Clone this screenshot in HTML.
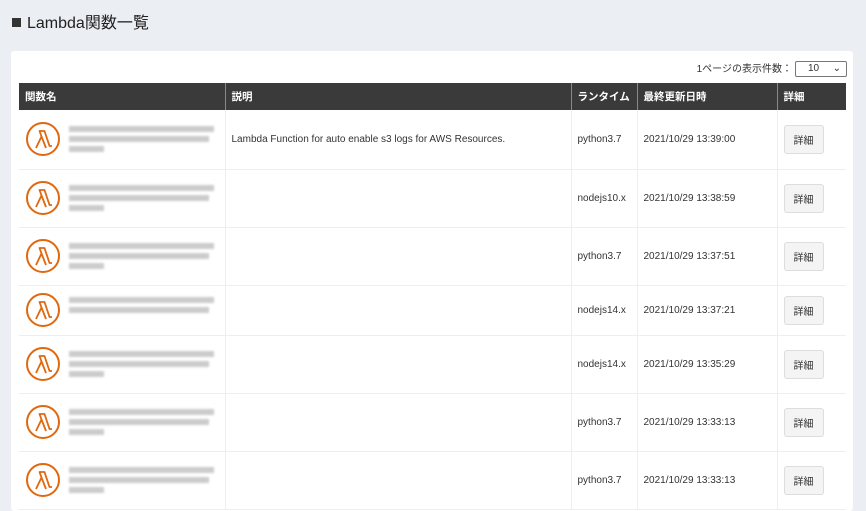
<!DOCTYPE html><html><head><meta charset="utf-8"><style>
body{margin:0;background:#ebeef2;font-family:"Liberation Sans","Noto Sans CJK JP",sans-serif;width:866px;height:487px;overflow:hidden;position:relative}
h1{position:absolute;left:12px;top:9px;margin:0;font-size:16px;font-weight:normal;color:#222}
h1:before{content:"";display:inline-block;width:9px;height:9px;background:#333;margin-right:6px;vertical-align:1px}
.card{position:absolute;left:11px;top:51px;width:842px;height:460px;background:#fff;border-radius:3px}
.pp{position:absolute;right:6px;top:9px;font-size:10px;color:#333}
.pp span.sel{display:inline-block;width:50px;height:14px;border:1px solid #777;border-radius:2px;vertical-align:middle;margin-left:3px;position:relative;font-size:10px;line-height:14px;text-indent:12px}
table{position:absolute;left:8px;top:32px;border-collapse:collapse;font-size:10px;color:#333;table-layout:fixed;width:827px}
th{background:#3a3a3a;color:#fff;text-align:left;height:27px;padding:0 0 0 6px;border-left:1px solid #888;font-size:10.5px}
td{border-left:1px solid #eee;border-bottom:1px solid #eee;padding:0 0 0 6px;white-space:nowrap;overflow:hidden}
.ic{display:inline-block;vertical-align:middle}
.bl{display:inline-block;vertical-align:middle;margin-left:8px;width:150px}
.bl i{display:block;height:6px;background:#ccc;margin:4px 0;filter:blur(1px)}
.btn{display:inline-block;border:1px solid #ddd;background:#f4f4f4;border-radius:3px;padding:6px 9px}
</style></head><body>
<h1>Lambda関数一覧</h1>
<div class="card">
<div class="pp">1ページの表示件数：<span class="sel">10<span style="position:absolute;right:5px;top:0;text-indent:0">⌄</span></span></div>
<table>
<colgroup><col style="width:206px"><col style="width:346px"><col style="width:66px"><col style="width:140px"><col style="width:69px"></colgroup>
<tr><th style="border-left:none">関数名</th><th>説明</th><th>ランタイム</th><th>最終更新日時</th><th>詳細</th></tr>
<script>
var d=[["Lambda Function for auto enable s3 logs for AWS Resources.","python3.7","2021/10/29 13:39:00",59],["","nodejs10.x","2021/10/29 13:38:59",58],["","python3.7","2021/10/29 13:37:51",58],["","nodejs14.x","2021/10/29 13:37:21",50],["","nodejs14.x","2021/10/29 13:35:29",58],["","python3.7","2021/10/29 13:33:13",58],["","python3.7","2021/10/29 13:33:13",58]];
var ic='<svg class="ic" width="36" height="36" viewBox="0 0 36 36"><circle cx="18" cy="18" r="16" fill="none" stroke="#e0680f" stroke-width="2"/><path d="M11 27 L16.5 15.5 L14.5 10 L19.5 10 L24.5 25 L27 25" fill="none" stroke="#e0680f" stroke-width="1.8" stroke-linejoin="round"/><path d="M16.5 15.5 L21 27" fill="none" stroke="#e0680f" stroke-width="1.8"/></svg>';
for(var k of d){document.write('<tr style="height:'+k[3]+'px"><td style="border-left:none">'+ic+'<span class="bl"><i style="width:145px"></i><i style="width:140px"></i><i style="width:'+(k[3]>55?35:0)+'px"></i></span></td><td>'+k[0]+'</td><td>'+k[1]+'</td><td>'+k[2]+'</td><td><span class="btn">詳細</span></td></tr>')}
</script>
</table></div>
</body></html>
